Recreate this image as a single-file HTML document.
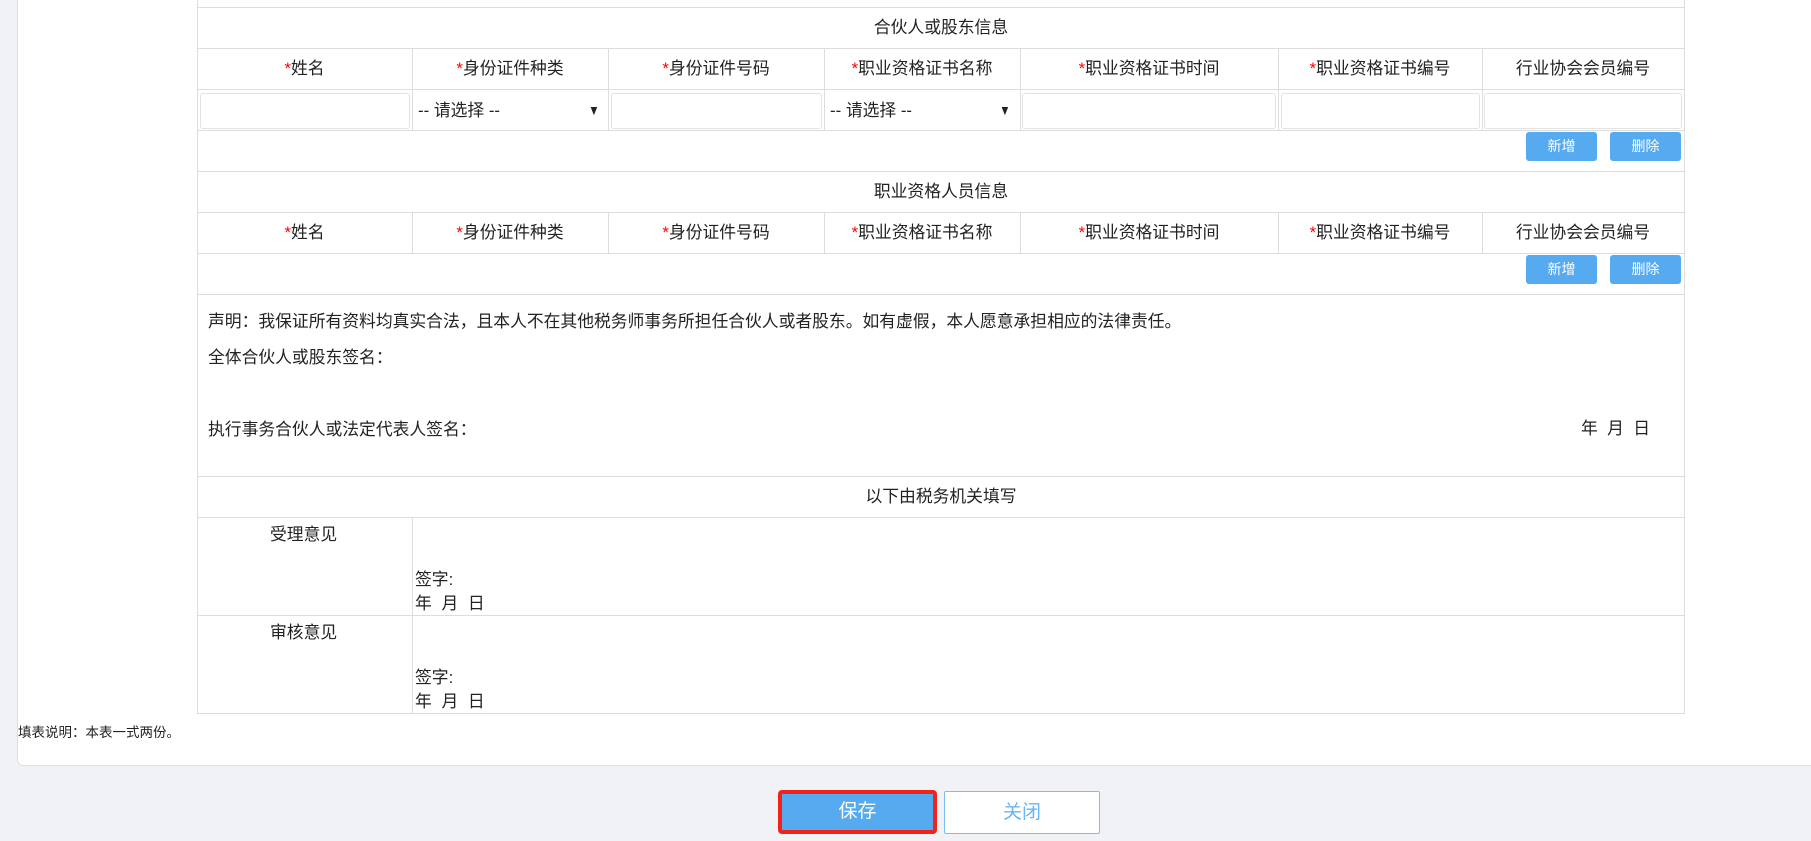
<!DOCTYPE html>
<html><head><meta charset="utf-8"><style>
*{margin:0;padding:0;box-sizing:border-box}
body{width:1811px;height:841px;background:#f0f2f5;position:relative;overflow:hidden;font-family:"Liberation Sans","Noto Sans CJK SC",sans-serif;color:#222;font-size:16.8px}
.panel{position:absolute;left:17px;top:-20px;width:1820px;height:786px;background:#fff;border:1px solid #dcdfe6;border-radius:6px}
.a{position:absolute;white-space:nowrap}
.h{position:absolute;height:1px;background:#ddd}
.v{position:absolute;width:1px;background:#ddd}
.c{position:absolute;text-align:center;line-height:41px;height:41px}
.r{color:#f00}
.inp{position:absolute;height:36px;top:93px;border:1px solid #e2e2e2;border-radius:3px;background:#fff}
.btn{position:absolute;width:71px;height:29px;background:#56aaf0;border-radius:3px;color:#fff;font-size:14px;text-align:center;line-height:29px}
.ln{position:absolute;line-height:24px}
</style></head><body>
<div class="panel"></div>
<div class="v" style="left:197px;top:0;height:714px"></div>
<div class="v" style="left:1684px;top:0;height:714px"></div>
<div class="h" style="left:197px;top:7px;width:1488px"></div>
<div class="h" style="left:197px;top:48px;width:1488px"></div>
<div class="h" style="left:197px;top:89px;width:1488px"></div>
<div class="h" style="left:197px;top:130px;width:1488px"></div>
<div class="h" style="left:197px;top:171px;width:1488px"></div>
<div class="h" style="left:197px;top:212px;width:1488px"></div>
<div class="h" style="left:197px;top:253px;width:1488px"></div>
<div class="h" style="left:197px;top:294px;width:1488px"></div>
<div class="h" style="left:197px;top:476px;width:1488px"></div>
<div class="h" style="left:197px;top:517px;width:1488px"></div>
<div class="h" style="left:197px;top:615px;width:1488px"></div>
<div class="h" style="left:197px;top:713px;width:1488px"></div>
<div class="v" style="left:412px;top:48px;height:82px"></div>
<div class="v" style="left:608px;top:48px;height:82px"></div>
<div class="v" style="left:824px;top:48px;height:82px"></div>
<div class="v" style="left:1020px;top:48px;height:82px"></div>
<div class="v" style="left:1278px;top:48px;height:82px"></div>
<div class="v" style="left:1482px;top:48px;height:82px"></div>
<div class="v" style="left:412px;top:212px;height:41px"></div>
<div class="v" style="left:608px;top:212px;height:41px"></div>
<div class="v" style="left:824px;top:212px;height:41px"></div>
<div class="v" style="left:1020px;top:212px;height:41px"></div>
<div class="v" style="left:1278px;top:212px;height:41px"></div>
<div class="v" style="left:1482px;top:212px;height:41px"></div>
<div class="v" style="left:412px;top:517px;height:196px"></div>

<div class="c" style="left:197px;width:1488px;top:7px">合伙人或股东信息</div>
<div class="c" style="left:197px;width:1488px;top:171px">职业资格人员信息</div>

<div class="c" style="left:197px;width:215px;top:48px"><span class="r">*</span>姓名</div>
<div class="c" style="left:412px;width:196px;top:48px"><span class="r">*</span>身份证件种类</div>
<div class="c" style="left:608px;width:216px;top:48px"><span class="r">*</span>身份证件号码</div>
<div class="c" style="left:824px;width:196px;top:48px"><span class="r">*</span>职业资格证书名称</div>
<div class="c" style="left:1020px;width:258px;top:48px"><span class="r">*</span>职业资格证书时间</div>
<div class="c" style="left:1278px;width:204px;top:48px"><span class="r">*</span>职业资格证书编号</div>
<div class="c" style="left:1482px;width:202px;top:48px">行业协会会员编号</div>

<div class="c" style="left:197px;width:215px;top:212px"><span class="r">*</span>姓名</div>
<div class="c" style="left:412px;width:196px;top:212px"><span class="r">*</span>身份证件种类</div>
<div class="c" style="left:608px;width:216px;top:212px"><span class="r">*</span>身份证件号码</div>
<div class="c" style="left:824px;width:196px;top:212px"><span class="r">*</span>职业资格证书名称</div>
<div class="c" style="left:1020px;width:258px;top:212px"><span class="r">*</span>职业资格证书时间</div>
<div class="c" style="left:1278px;width:204px;top:212px"><span class="r">*</span>职业资格证书编号</div>
<div class="c" style="left:1482px;width:202px;top:212px">行业协会会员编号</div>

<div class="inp" style="left:200px;width:210px"></div>
<div class="inp" style="left:611px;width:211px"></div>
<div class="inp" style="left:1022px;width:254px"></div>
<div class="inp" style="left:1281px;width:199px"></div>
<div class="inp" style="left:1484px;width:198px"></div>
<div class="a" style="left:418px;top:99px;line-height:24px">-- 请选择 --</div>
<div class="a" style="left:587px;top:98px;line-height:24px;font-size:14px;transform:scaleX(0.8)">▼</div>
<div class="a" style="left:830px;top:99px;line-height:24px">-- 请选择 --</div>
<div class="a" style="left:998px;top:98px;line-height:24px;font-size:14px;transform:scaleX(0.8)">▼</div>

<div class="btn" style="left:1526px;top:132px">新增</div>
<div class="btn" style="left:1610px;top:132px">删除</div>
<div class="btn" style="left:1526px;top:255px">新增</div>
<div class="btn" style="left:1610px;top:255px">删除</div>

<div class="ln a" style="left:208px;top:310px">声明：我保证所有资料均真实合法，且本人不在其他税务师事务所担任合伙人或者股东。如有虚假，本人愿意承担相应的法律责任。</div>
<div class="ln a" style="left:208px;top:346px">全体合伙人或股东签名：</div>
<div class="ln a" style="left:208px;top:418px">执行事务合伙人或法定代表人签名：</div>
<div class="ln a" style="left:1581px;top:417px">年&nbsp;&nbsp;月&nbsp;&nbsp;日</div>
<div class="c" style="left:197px;width:1488px;top:476px">以下由税务机关填写</div>

<div class="ln a" style="left:270px;top:523px">受理意见</div>
<div class="ln a" style="left:415px;top:568px">签字:</div>
<div class="ln a" style="left:415px;top:592px;word-spacing:5px">年 月 日</div>
<div class="ln a" style="left:270px;top:621px">审核意见</div>
<div class="ln a" style="left:415px;top:666px">签字:</div>
<div class="ln a" style="left:415px;top:690px;word-spacing:5px">年 月 日</div>

<div class="a" style="left:18px;top:724px;font-size:13.5px;line-height:18px">填表说明：本表一式两份。</div>

<div class="a" style="left:778px;top:790px;width:159px;height:44px;background:#56aaf0;border:4px solid #f0221a;border-radius:4px;color:#fff;font-size:19px;text-align:center;line-height:36px">保存</div>
<div class="a" style="left:944px;top:791px;width:156px;height:43px;background:#fff;border:1px solid #7bbdf5;border-radius:2px;color:#69b4f2;font-size:19px;text-align:center;line-height:41px">关闭</div>
</body></html>
